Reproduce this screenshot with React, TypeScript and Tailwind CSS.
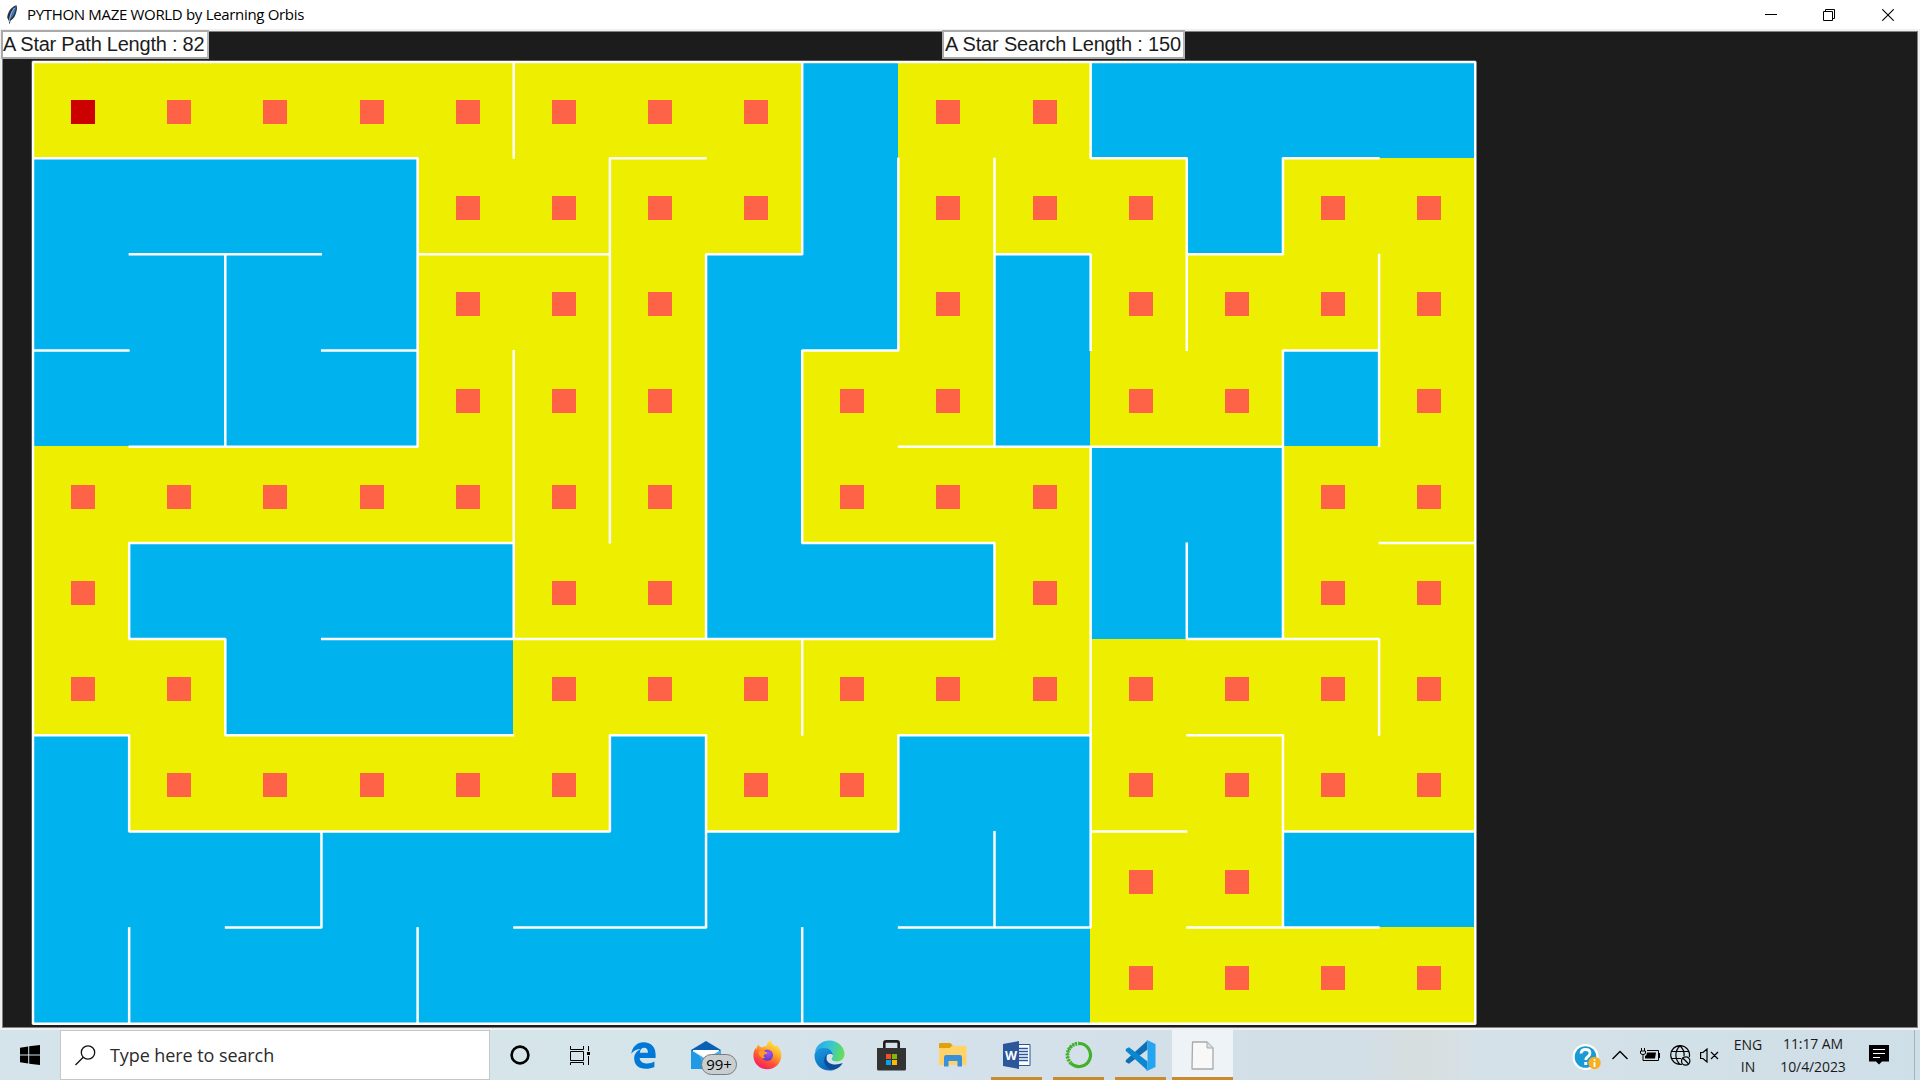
import React from "react";

const CELL_W = 96.15;
const CELL_H = 96.18;

const ROWS = [
  "YYYYYYYY.YY....",
  "....YYYY.YYY.YY",
  "....YYY..Y.YYYY",
  "....YYY.YY.YY.Y",
  "YYYYYYY.YYY..YY",
  "Y....YY...Y..YY",
  "YY...YYYYYYYYYY",
  ".YYYYY.YY..YYYY",
  "...........YY..",
  "...........YYYY",
];

// Horizontal walls: for each grid line, the [from, to] column spans.
const H_WALLS: number[][][] = [
  [[0, 15]],
  [[0, 4], [6, 7], [11, 12], [13, 14]],
  [[1, 3], [4, 6], [7, 8], [10, 11], [12, 13]],
  [[0, 1], [3, 4], [8, 9], [13, 14]],
  [[1, 4], [9, 13]],
  [[1, 5], [8, 10], [14, 15]],
  [[1, 2], [3, 10], [12, 14]],
  [[0, 1], [2, 5], [6, 7], [9, 11], [12, 13]],
  [[1, 6], [7, 9], [11, 12], [13, 15]],
  [[2, 3], [5, 7], [9, 11], [12, 14]],
  [[0, 15]],
];

// Vertical walls: for each grid line, the [from, to] row spans.
const V_WALLS: number[][][] = [
  [[0, 10]],
  [[5, 6], [7, 8], [9, 10]],
  [[2, 4], [6, 7]],
  [[8, 9]],
  [[1, 4], [9, 10]],
  [[0, 1], [3, 6]],
  [[1, 5], [7, 8]],
  [[2, 6], [7, 9]],
  [[0, 2], [3, 5], [6, 7], [9, 10]],
  [[1, 3], [7, 8]],
  [[1, 4], [5, 6], [8, 9]],
  [[0, 1], [2, 3], [4, 9]],
  [[1, 3], [5, 6]],
  [[1, 2], [3, 6], [7, 9]],
  [[2, 4], [6, 7]],
  [[0, 10]],
];

function Maze() {
  return (
    <div className="relative ml-[29.6px] mt-[29.6px] h-[961.8px] w-[1442.25px]">
      <div className="grid h-full w-full grid-cols-15 grid-rows-10">
        {ROWS.map((row, r) =>
          row.split("").map((c, i) => (
            <div
              key={`${r}-${i}`}
              className={
                c === "Y"
                  ? "flex items-center justify-center bg-[#eeee00] pl-[4.8px] pt-[4.8px]"
                  : "bg-[#00b2ee]"
              }
            >
              {c === "Y" && (
                <div
                  className={
                    r === 0 && i === 0
                      ? "h-6 w-6 bg-[#cd0000]"
                      : "h-6 w-6 bg-[#ff6347]"
                  }
                />
              )}
            </div>
          )),
        )}
      </div>
      <svg
        className="absolute inset-0 h-full w-full overflow-visible"
        stroke="#fff"
        strokeWidth="2.5"
        strokeLinecap="butt"
      >
        {H_WALLS.map((spans, j) =>
          spans.map(([a, b]) => (
            <line
              key={`h${j}-${a}`}
              x1={a * CELL_W - 0.5}
              x2={b * CELL_W + 0.5}
              y1={j * CELL_H}
              y2={j * CELL_H}
            />
          )),
        )}
        {V_WALLS.map((spans, j) =>
          spans.map(([a, b]) => (
            <line
              key={`v${j}-${a}`}
              y1={a * CELL_H - 0.5}
              y2={b * CELL_H + 0.5}
              x1={j * CELL_W}
              x2={j * CELL_W}
            />
          )),
        )}
      </svg>
    </div>
  );
}

function Label({ text, className }: { text: string; className: string }) {
  return (
    <div
      className={`absolute flex h-[29px] items-center whitespace-nowrap border-2 border-[#a9a9a9] border-r-[#b4b4b4] bg-white pb-px font-['Liberation_Sans',Arial,sans-serif] text-[20px] text-[#1c1c1c] ${className}`}
    >
      {text}
    </div>
  );
}

function TitleBar() {
  return (
    <header className="flex h-[29px] items-center bg-white">
      <svg className="ml-1.5 h-5 w-3" viewBox="0 0 12 20">
        <path d="M10.5 0.3C6 1.5 2 6 1.2 12.5L2.8 16 3.6 19.5 4.6 15.5C8 14 10.5 9 11 3Z" fill="#26303d" />
        <path d="M10 1.3C6.5 3.5 4 8 3.6 14.2 7 12.5 9.5 8 10 1.3Z" fill="#3f74bd" />
        <path d="M8.5 3C6 6 4 10 3.2 17" stroke="#b9d3ee" strokeWidth="0.8" fill="none" />
      </svg>
      <h1 className="ml-[9px] whitespace-nowrap text-[15px] tracking-[-0.32px] text-black">
        PYTHON MAZE WORLD by Learning Orbis
      </h1>
      <div className="ml-auto mr-[26px] flex items-center gap-[47px]">
        <svg className="-mr-px h-3 w-3" viewBox="0 0 12 12">
          <path d="M0 5.500H12" stroke="#000" />
        </svg>
        <svg className="h-3 w-3" viewBox="0 0 12 12" fill="none" stroke="#000">
          <path d="M0.500 2.500H9.500V11.500H0.500Z M2.500 2.500V0.500H11.500V9.500H9.500" />
        </svg>
        <svg className="h-3 w-3" viewBox="0 0 12 12">
          <path d="M0.300 0.300L11.700 11.700M11.700 0.300L0.300 11.700" stroke="#000" strokeWidth="1.100" />
        </svg>
      </div>
    </header>
  );
}

const EdgeLegacy = () => (
  <svg className="h-[27px] w-[25px]" viewBox="0 0 25 27">
    <path
      d="M.3 11.8C1.3 4.8 6 .2 12.7.2 20.3.2 24.6 5.3 24.6 12.5V16H8.6C9 19.3 11.7 21.5 16 21.5 18.9 21.5 21.5 20.8 23.4 19.5V25C21 26.2 18 26.8 14.7 26.8 7.6 26.8 3.2 22.6 3.2 16.5 3.2 12 5.8 8.6 10 7 5.8 7 2.4 8.8.3 11.8ZM8.8 10.8H17C17 7.5 15.6 5.7 13.2 5.7 10.8 5.7 9.2 7.6 8.8 10.8Z"
      fill="#0078d7"
    />
  </svg>
);

const Mail = () => (
  <div className="relative h-7 w-[30px]">
    <svg className="h-7 w-[30px]" viewBox="0 0 30 28">
      <path d="M0 9L15 0 30 9V14H0Z" fill="#0a5fb4" />
      <path d="M2 9H28V17L15 20 2 17Z" fill="#f4f4f4" />
      <path d="M0 9L15 18.5 30 9V28H0Z" fill="#1f9ae4" />
      <path d="M2 9H28L15 16Z" fill="#fff" />
      <path d="M30 9V28H14L8 14 15 18.5Z" fill="#3db0ee" />
    </svg>
    <span className="absolute left-[10px] top-[13px] flex h-[21px] w-9 items-center justify-center rounded-full border border-[#777b7e] bg-[#c9ced1] text-[15px] text-black">
      99+
    </span>
  </div>
);

const Firefox = () => (
  <svg className="h-[30px] w-[29px]" viewBox="0 0 29 30">
    <defs>
      <linearGradient id="ffBody" x1="0.8" y1="0" x2="0.25" y2="1">
        <stop offset="0" stopColor="#fff04a" />
        <stop offset="0.35" stopColor="#ffb12a" />
        <stop offset="0.65" stopColor="#ff5a30" />
        <stop offset="1" stopColor="#f2156c" />
      </linearGradient>
      <radialGradient id="ffCore" cx="0.6" cy="0.3" r="0.7">
        <stop offset="0" stopColor="#a355f0" />
        <stop offset="1" stopColor="#5a3ccb" />
      </radialGradient>
    </defs>
    <path
      d="M5.2 4.8C6.2 6 7.5 7.2 9 7.6 10.5 6.6 12 6.2 13.5 6.3 14 3.5 15.5 1.3 18 .2 18.2 3 20 4.4 22 6.2L24 5.5C27 8.5 28.6 12 28.3 16.3 27.8 23.6 22 29.3 14.5 29.3 6.5 29.3.5 23.5.4 15.8.4 12.5 1.3 9.8 2.8 7.8L3.3 9.7C3.5 7.8 4.1 6.2 5.2 4.8Z"
      fill="url(#ffBody)"
    />
    <circle cx="14.4" cy="15.2" r="5.600" fill="url(#ffCore)" />
    <path d="M5.5 12C8 10 11 10.5 13.8 12.3 15 13.1 13.7 14.3 11.5 14.6 10 15 10.5 17 12.5 18 8.5 18.8 5.8 16 5.5 12Z" fill="#ff9a2b" />
  </svg>
);

const Edge = () => (
  <svg className="h-[31px] w-[31px]" viewBox="0 0 31 31">
    <defs>
      <linearGradient id="edgeTop" x1="0" y1="0.4" x2="1" y2="0.6">
        <stop offset="0" stopColor="#2aa8e8" />
        <stop offset="0.5" stopColor="#38c6d4" />
        <stop offset="1" stopColor="#68e04b" />
      </linearGradient>
      <linearGradient id="edgeLeft" x1="0" y1="0" x2="0.5" y2="1">
        <stop offset="0" stopColor="#1b9de2" />
        <stop offset="1" stopColor="#0868bc" />
      </linearGradient>
    </defs>
    <path
      d="M.8 12.2C2.3 5 8.4.5 15.5.5 24 .5 30.5 7 30.5 14 30.5 18.5 27 21.4 22.5 21.4 19.5 21.4 17.7 20.2 17.7 19 17.7 18 19 17.5 19 15 19 11.5 15 9 10 9 6 9 2.5 10 .8 12.2Z"
      fill="url(#edgeTop)"
    />
    <path
      d="M.5 15.5C.6 11 4.5 8 9.8 8 15.2 8 19 11.5 19 15.2 17.5 12.8 11.6 13.5 11.5 19 11.5 25 16 29 20 30 10 32.5.5 26 .5 15.5Z"
      fill="url(#edgeLeft)"
    />
    <path
      d="M12.8 14.5C8 18.5 9.5 28.5 19.5 30 24 28.8 27 26.3 28.7 23 23.5 25.3 14 25.5 12.5 19Z"
      fill="#0c4d99"
    />
  </svg>
);

const Store = () => (
  <svg className="h-[31px] w-[29px]" viewBox="0 0 29 31">
    <path d="M7.3 9V3.2Q7.3 1.4 9 1.4H20Q21.7 1.4 21.7 3.2V9" fill="none" stroke="#1e1e1e" strokeWidth="2.6" />
    <path d="M0 8H29V29Q29 30.500 27.500 30.500H1.500Q0 30.500 0 29Z" fill="#333" />
    <path d="M9 14H14V19H9Z" fill="#f25022" />
    <path d="M15 14H20V19H15Z" fill="#7fba00" />
    <path d="M9 20H14V25H9Z" fill="#00a4ef" />
    <path d="M15 20H20V25H15Z" fill="#ffb900" />
  </svg>
);

const Folder = () => (
  <svg className="h-6 w-7" viewBox="0 0 28 24">
    <path d="M0 1Q0 0 1 0H11.500L14 3V8H0Z" fill="#e0a10a" />
    <path d="M0 5H10.500L13 2.700H26.500Q27.500 2.700 27.500 3.700V22H0Z" fill="#ffd368" />
    <path d="M5 23.500V14.200Q5 12 7.200 12H20.800Q23 12 23 14.200V23.500H18.500V18H9.500V23.500Z" fill="#3a8fdb" />
  </svg>
);

const Word = () => (
  <svg className="h-7 w-7" viewBox="0 0 28 28">
    <path d="M14 3.500H27V24.500H14Z" fill="#fff" stroke="#2b579a" />
    <path d="M16 7.500H25M16 10.500H25M16 13.500H25M16 16.500H25M16 19.500H25" stroke="#2b579a" strokeWidth="1.300" />
    <path d="M0 3L16 0V28L0 25Z" fill="#2b579a" />
    <text x="8" y="18.500" textAnchor="middle" fontSize="12.500" fontWeight="700" fill="#fff">
      W
    </text>
  </svg>
);

const Anaconda = () => (
  <svg className="h-7 w-7" viewBox="0 0 28 28" fill="none" stroke="#43b02a">
    <path d="M14 2.500A11.500 11.500 0 1 1 6 22.300" strokeWidth="3.200" />
    <path d="M6 22.300A11.500 11.500 0 0 1 14 2.500" strokeWidth="3.800" strokeDasharray="1.900 1" />
    <path d="M4.700 20A11.500 11.500 0 0 1 12 2.200" strokeWidth="1.500" strokeDasharray="2.500 0.800" />
  </svg>
);

const VsCode = () => (
  <svg className="h-[31px] w-[31px]" viewBox="0 0 31 31">
    <path d="M22.500 0.500V9.500L4 23.800 1.500 22.500Q-.2 21.200 1.200 19.800Z" fill="#0f6fb3" />
    <path d="M22.500 30.500V21.500L4 7.200 1.500 8.500Q-.2 9.800 1.200 11.200Z" fill="#0b86d1" />
    <path d="M22.500 0.300L30.500 4V27L22.500 30.700Q21.500 30.700 20.500 29.500 22.500 30 22.500 27.500V3.500Q22.500 1 20.500 1.500Z" fill="#25a5f0" />
  </svg>
);

const Doc = () => (
  <svg className="h-[29px] w-[23px]" viewBox="0 0 23 29">
    <path d="M1.500 1H16L22 7V28H1Z" fill="#f8f8f8" stroke="#a7a9ab" strokeWidth="1.300" strokeLinejoin="round" />
    <path d="M16 1V7H22" fill="#dcdcdc" stroke="#a7a9ab" />
  </svg>
);

const Cortana = () => (
  <svg className="h-5 w-5" viewBox="0 0 20 20">
    <circle cx="10" cy="10" r="8.400" fill="none" stroke="#000" strokeWidth="2.600" />
  </svg>
);

const TaskView = () => (
  <svg className="h-[19px] w-5" viewBox="0 0 20 19" fill="none" stroke="#000">
    <path d="M0.500 0V3.500H13.500V0M0.500 5.500H13.500V14.500H0.500ZM0.500 19V16.500H13.500V19M18.500 0V5M18.500 10V19" />
    <path d="M17 6H20V9H17Z" fill="#000" stroke="none" />
  </svg>
);

function TaskItem({
  children,
  className = "",
  running = false,
}: {
  children: React.ReactNode;
  className?: string;
  running?: boolean;
}) {
  return (
    <div className={`relative flex h-[50px] shrink-0 items-center justify-center ${className}`}>
      {children}
      {running && <span className="absolute inset-x-[5px] bottom-0 h-[3px] bg-[#cb8a2c]" />}
    </div>
  );
}

function Taskbar() {
  return (
    <footer className="flex h-[50px] items-center bg-[linear-gradient(90deg,#d5e3ea_0%,#d5e5e9_30%,#d5e1ea_50%,#d3dfe7_71%,#d8dedd_74%,#d5e1e8_77%,#cfdfe7_100%)]">
      <TaskItem className="w-[60px]">
        <svg className="h-5 w-5" viewBox="0 0 20 20">
          <path d="M0 2.700L8.200 1.500V9.500H0ZM9.200 1.300L20 0V9.500H9.200ZM0 10.500H8.200V18.500L0 17.300ZM9.200 10.500H20V20L9.200 18.700Z" />
        </svg>
      </TaskItem>
      <div className="flex h-[50px] w-[430px] items-center border border-[#c3c8cb] bg-white">
        <svg className="ml-[14px] h-[21px] w-[21px]" viewBox="0 0 21 21" fill="none" stroke="#111" strokeWidth="1.300">
          <circle cx="13" cy="7.500" r="6.700" />
          <path d="M8.200 12.200L0.500 20" />
        </svg>
        <span className="ml-[14px] whitespace-nowrap text-[18px] tracking-[-0.08px] text-[#2b2b2b]">Type here to search</span>
      </div>
      <TaskItem className="w-[60px]"><Cortana /></TaskItem>
      <TaskItem className="w-[60px]"><TaskView /></TaskItem>
      <TaskItem className="ml-[3px] w-[61px]"><EdgeLegacy /></TaskItem>
      <TaskItem className="ml-px w-[62px]"><Mail /></TaskItem>
      <TaskItem className="w-[61px]"><Firefox /></TaskItem>
      <TaskItem className="w-[62px]"><Edge /></TaskItem>
      <TaskItem className="w-[62px]"><Store /></TaskItem>
      <TaskItem className="w-[62px]"><Folder /></TaskItem>
      <TaskItem className="ml-[2px] w-[61px]" running><Word /></TaskItem>
      <TaskItem className="ml-px w-[61px]" running><Anaconda /></TaskItem>
      <TaskItem className="ml-px w-[61px]" running><VsCode /></TaskItem>
      <div className="relative ml-px flex h-[50px] w-[61px] items-center justify-center bg-[#eef3f7]">
        <Doc />
        <span className="absolute inset-x-0 bottom-0 h-[3px] bg-[#cb8a2c]" />
      </div>

      <div className="ml-auto flex h-[50px] items-center">
        <svg className="mt-1 h-[27px] w-[29px]" viewBox="0 0 29 27">
          <circle cx="13.500" cy="13" r="13" fill="#fff" />
          <circle cx="13.500" cy="13" r="10.800" fill="#1a9ad6" />
          <path d="M9 9.500Q9.300 5.500 13.600 5.500 18 5.500 18 9.300 18 11.500 15.500 13 13.800 14 13.800 16" fill="none" stroke="#fff" strokeWidth="2.800" />
          <path d="M12.300 18H15.300V21H12.300Z" fill="#fff" />
          <circle cx="22.500" cy="19" r="6.200" fill="#f7b022" />
          <path d="M22.500 15V16.800M22.500 18V23" stroke="#fff" strokeWidth="1.800" />
        </svg>
        <svg className="ml-[11px] h-[10px] w-4" viewBox="0 0 16 10">
          <path d="M0.500 9L8 1.500 15.500 9" fill="none" stroke="#000" strokeWidth="1.400" />
        </svg>
        <svg className="ml-3 h-[14px] w-5" viewBox="0 0 20 14">
          <path d="M1.500 0V3M4.500 0V3M0.500 3H5.500V5Q5.500 6.500 3 6.500 0.500 6.500 0.500 5ZM3 6.500V12.500H18.500V2.500H7" fill="none" stroke="#000" />
          <path d="M7 4.500H16L15 10.500H5V8Q7 7 7 4.500ZM18.500 5H20V10H18.500Z" />
        </svg>
        <svg className="ml-[10px] h-[21px] w-[21px]" viewBox="0 0 21 21" fill="none" stroke="#000" strokeWidth="1.200">
          <path d="M19.300 12A9.400 9.400 0 1 0 12 19.200M1.500 6.500H18.500M1 13.500H11M10 0.700C4.500 6 4.500 14 10 19.400M10 0.700C13.500 4 14.500 7.500 14 11" />
          <circle cx="15.700" cy="16" r="4.200" />
          <path d="M12.800 13L18.700 19" />
        </svg>
        <svg className="ml-[9px] h-[15px] w-[19px]" viewBox="0 0 19 15" fill="none" stroke="#000" strokeWidth="1.200">
          <path d="M0.600 4.500H3L7 1V14L3 10.500H0.600ZM11 4L18 11M18 4L11 11" />
        </svg>
        <div className="ml-[14px] mt-[2px] w-[30px] text-center text-[14px] leading-[22px] text-[#1a1a1a]">
          <div>ENG</div>
          <div>IN</div>
        </div>
        <div className="ml-3 mt-px w-[76px] whitespace-nowrap text-center text-[14px] leading-[22.500px] tracking-[-0.100px] text-[#1a1a1a]">
          <div>11:17 AM</div>
          <div>10/4/2023</div>
        </div>
        <svg className="ml-[18px] h-5 w-5" viewBox="0 0 20 20">
          <path d="M0 0H20V16.500H13L10 19.500 7 16.500H0Z" />
          <path d="M4 4.500H16M4 8.500H16M4 12.500H11" stroke="#fff" />
        </svg>
        <span className="ml-[25px] mr-[5px] h-[50px] w-px bg-[#a3b1b8]" />
      </div>
    </footer>
  );
}

export default function App() {
  return (
    <div className="flex h-[1080px] w-[1920px] flex-col overflow-hidden bg-[#f0f0f0] font-['Open_Sans','Noto_Sans',sans-serif]">
      <TitleBar />
      <main className="relative h-[1001px] bg-[#f0f0f0] px-[2px] pb-[2px] pt-[2px]">
        <div className="flex h-full border border-[#828282] bg-[#1c1c1c]">
          <Maze />
        </div>
        <Label text="A Star Path Length : 82" className="left-px top-px w-[208px] tracking-[-0.24px]" />
        <Label text="A Star Search Length : 150" className="left-[942px] top-px w-[243px] pl-px tracking-[-0.16px]" />
      </main>
      <Taskbar />
    </div>
  );
}
